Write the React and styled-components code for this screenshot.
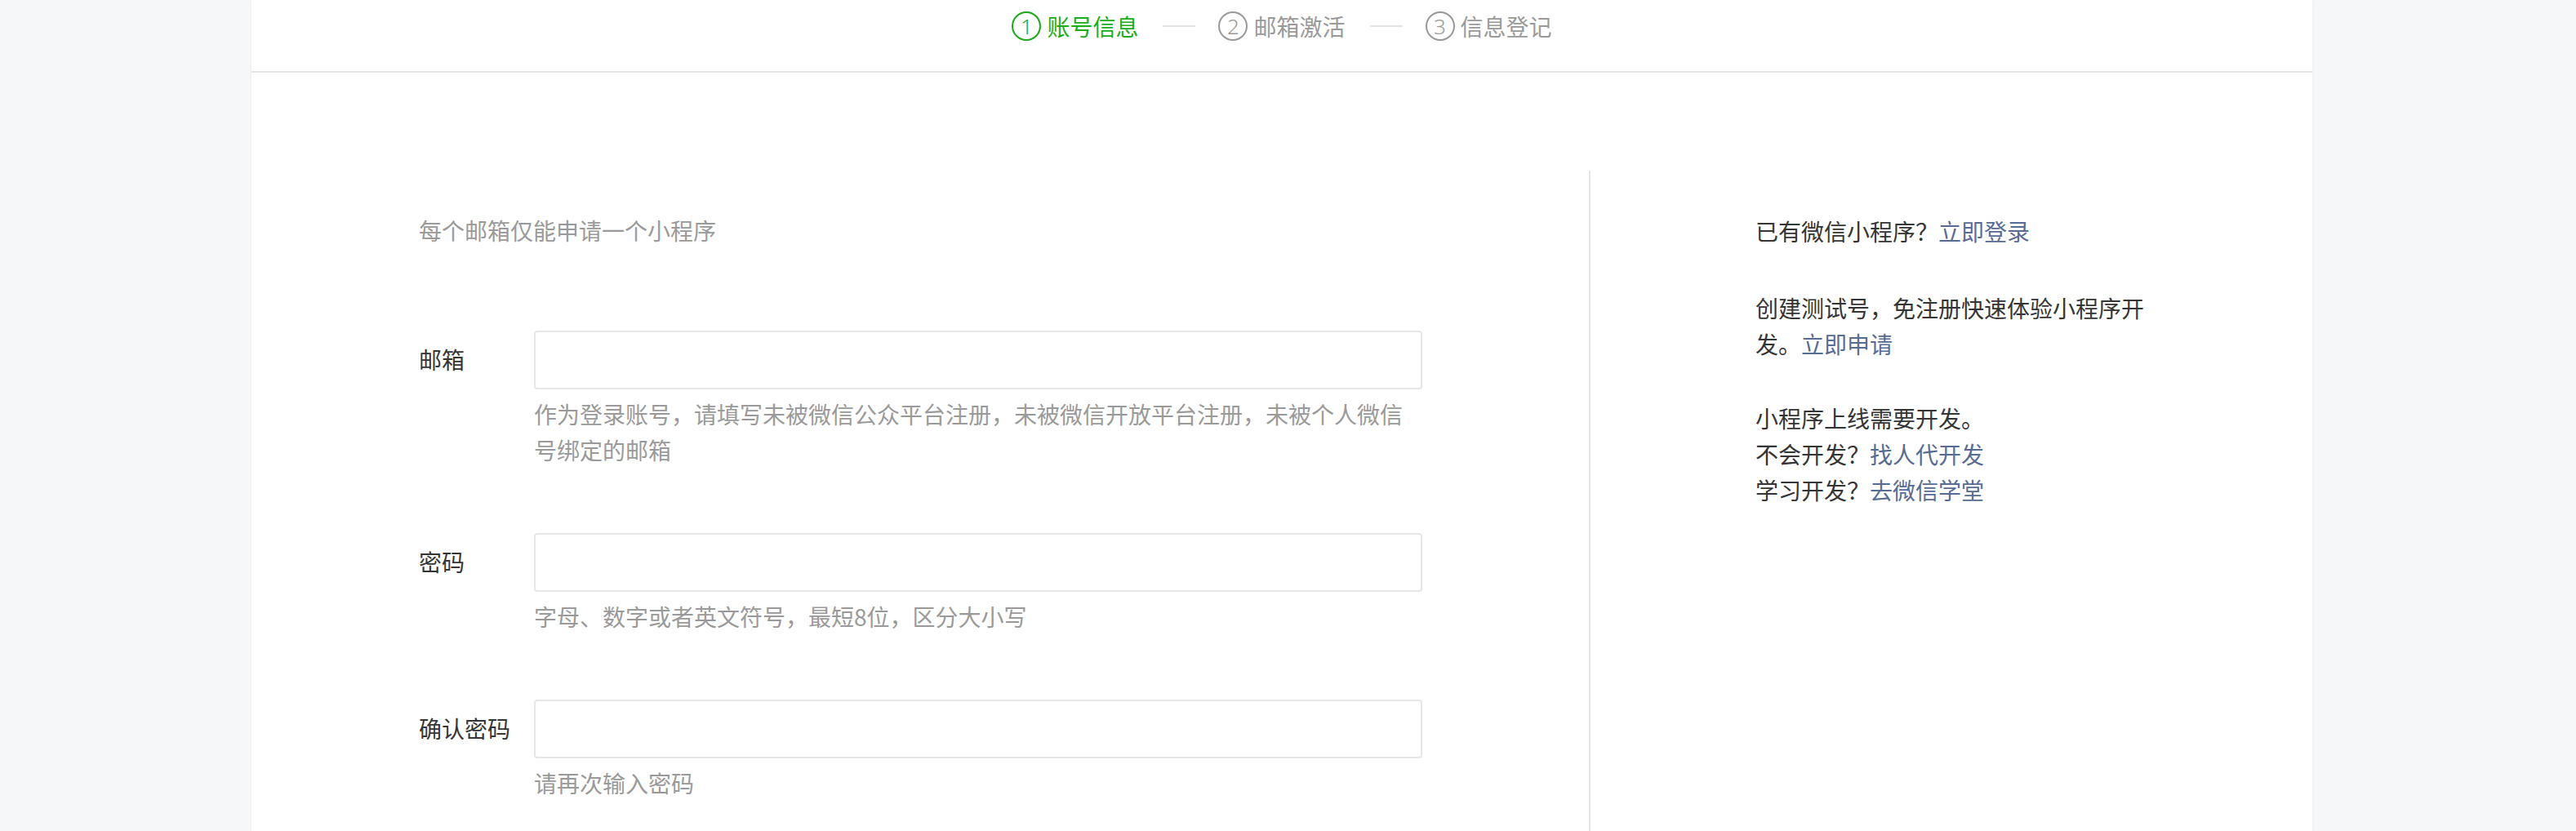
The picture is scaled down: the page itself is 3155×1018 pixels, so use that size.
import React from "react";
import styled, { createGlobalStyle } from "styled-components";

const GlobalStyle = createGlobalStyle`
  html, body {
    margin: 0;
    padding: 0;
    background: #f6f7f9;
    overflow: hidden;
  }
  body {
    font-family: "Noto Sans CJK SC", "Noto Sans", sans-serif;
    color: #353535;
  }
  * { box-sizing: border-box; }
`;

/* 页面 / 面板 */
const Page = styled.div`
  display: flex;
  justify-content: center;
  padding-right: 15px;
  min-height: 1018px;
`;

const Panel = styled.div`
  width: 2524px;
  background: #fff;
  box-shadow: 0 0 4px rgba(0, 0, 0, 0.05);
  min-height: 1100px;
  display: flex;
  flex-direction: column;
`;

/* 顶部步骤条 */
const Header = styled.div`
  height: 89px;
  border-bottom: 2px solid #e7e7eb;
  display: flex;
  justify-content: center;
`;

const Steps = styled.div`
  height: 64px;
  display: flex;
  align-items: center;
`;

const Step = styled.div`
  display: flex;
  align-items: center;
  gap: 7px;
  color: ${(p) => (p.$active ? "#1aad19" : "#9a9a9a")};
  font-size: 28px;
  line-height: 36px;
`;

const StepNum = styled.span`
  width: 36px;
  height: 36px;
  border-radius: 50%;
  border: 2px solid currentColor;
  display: grid;
  place-items: center;
  font-family: "Noto Sans", "Liberation Sans", sans-serif;
  font-size: 26px;
  line-height: 1;
  font-weight: 300;
`;

const Connector = styled.span`
  width: 40px;
  height: 2px;
  margin: 0 28px 0 30px;
  background: #e4e4e8;
`;

/* 主体 */
const Body = styled.div`
  flex: 1;
  padding-top: 120px;
  display: flex;
`;

const FormCol = styled.div`
  width: 1640px;
  padding: 51px 206px 0 205px;
  border-right: 2px solid #e7e7eb;
`;

const Intro = styled.p`
  margin: 0 0 101px;
  font-size: 28px;
  line-height: 44px;
  color: #9a9a9a;
`;

const FieldRow = styled.div`
  display: grid;
  grid-template-columns: 141px 1088px;
  margin-bottom: 80px;
`;

const Label = styled.label`
  font-size: 28px;
  line-height: 70px;
  color: #353535;
`;

const Input = styled.input`
  width: 100%;
  height: 72px;
  border: 2px solid #e7e7eb;
  border-radius: 4px;
  background: #fff;
  padding: 0 18px;
  font-size: 28px;
  outline: none;
`;

const Tip = styled.p`
  grid-column: 2;
  margin: 8px 0 0;
  font-size: 28px;
  line-height: 44px;
  color: #9a9a9a;
`;

const SideCol = styled.div`
  flex: 1;
  padding: 52px 0 0 202px;
`;

const SidePara = styled.p`
  width: 490px;
  margin: 0 0 ${(p) => p.$gap || 0}px;
  font-size: 28px;
  line-height: 44px;
  color: #353535;
`;

const Link = styled.a`
  color: #576b95;
  text-decoration: none;
  cursor: pointer;
`;

const fields = [
    {
        label: "邮箱",
        type: "text",
        tip: "作为登录账号，请填写未被微信公众平台注册，未被微信开放平台注册，未被个人微信号绑定的邮箱",
    },
    {
        label: "密码",
        type: "password",
        tip: "字母、数字或者英文符号，最短8位，区分大小写",
    },
    {
        label: "确认密码",
        type: "password",
        tip: "请再次输入密码",
    },
];

const steps = ["账号信息", "邮箱激活", "信息登记"];

export default function App() {
    return (
        <>
            <GlobalStyle />
            <Page>
                <Panel>
                    <Header>
                        <Steps>
                            {steps.map((s, i) => (
                                <React.Fragment key={s}>
                                    {i > 0 && <Connector />}
                                    <Step $active={i === 0}>
                                        <StepNum>{i + 1}</StepNum>
                                        {s}
                                    </Step>
                                </React.Fragment>
                            ))}
                        </Steps>
                    </Header>

                    <Body>
                        <FormCol>
                            <Intro>每个邮箱仅能申请一个小程序</Intro>
                            {fields.map((f) => (
                                <FieldRow key={f.label}>
                                    <Label>{f.label}</Label>
                                    <Input type={f.type} />
                                    <Tip>{f.tip}</Tip>
                                </FieldRow>
                            ))}
                        </FormCol>

                        <SideCol>
                            <SidePara $gap={50}>
                                已有微信小程序？<Link>立即登录</Link>
                            </SidePara>
                            <SidePara $gap={47}>
                                创建测试号，免注册快速体验小程序开
                                <br />
                                发。<Link>立即申请</Link>
                            </SidePara>
                            <SidePara>
                                小程序上线需要开发。
                                <br />
                                不会开发？<Link>找人代开发</Link>
                                <br />
                                学习开发？<Link>去微信学堂</Link>
                            </SidePara>
                        </SideCol>
                    </Body>
                </Panel>
            </Page>
        </>
    );
}
